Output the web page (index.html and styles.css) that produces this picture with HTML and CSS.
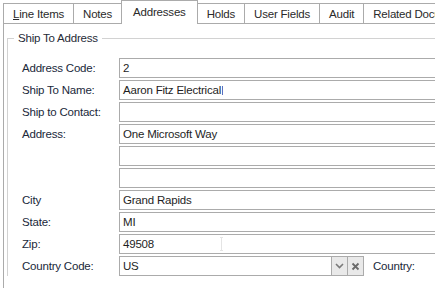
FILE: index.html
```html
<html>
    <head>
        <title>Addresses</title>
        <link rel="stylesheet" href="styles.css">
    </head>
    <body>
        <div class="tabs">
            <div class="tab"><u>L</u>ine Items</div>
            <div class="tab">Notes</div>
            <div class="tab active">Addresses</div>
            <div class="tab">Holds</div>
            <div class="tab">User Fields</div>
            <div class="tab">Audit</div>
            <div class="tab">Related Documents</div>
        </div>
        <div class="panel">
            <fieldset class="group">
                <legend>Ship To Address</legend>
                <div class="form">
                    <label>Address Code:</label>
                    <div class="field">2</div>
                    <label>Ship To Name:</label>
                    <div class="field">Aaron Fitz Electrical<span class="caret"></span></div>
                    <label>Ship to Contact:</label>
                    <div class="field"></div>
                    <label>Address:</label>
                    <div class="field">One Microsoft Way</div>
                    <label></label>
                    <div class="field"></div>
                    <label></label>
                    <div class="field"></div>
                    <label>City</label>
                    <div class="field">Grand Rapids</div>
                    <label>State:</label>
                    <div class="field">MI</div>
                    <label>Zip:</label>
                    <div class="field">49508<span class="ibeam"></span></div>
                    <label>Country Code:</label>
                    <div class="combo-row">
                        <div class="combo">
                            <div class="combo-text">US</div>
                            <div class="combo-btn">
                                <svg width="9" height="6" viewBox="0 0 9 6"><path d="M1 1 L4.5 4.5 L8 1" fill="none" stroke="#7a7a7a" stroke-width="1.6"/></svg>
                            </div>
                            <div class="combo-btn">
                                <svg width="9" height="9" viewBox="0 0 9 9"><path d="M1.5 1.5 L7.5 7.5 M7.5 1.5 L1.5 7.5" fill="none" stroke="#6a6a6a" stroke-width="1.8"/></svg>
                            </div>
                        </div>
                        <span class="side-label">Country:</span>
                    </div>
                </div>
            </fieldset>
        </div>
    </body>
</html>
```

FILE: styles.css
```css
body {
    margin: 0;
    background-color: #ffffff;
    font-family: "Liberation Sans", Arial, sans-serif;
    font-size: 11.5px;
    letter-spacing: -0.2px;
    color: #20283a;
    overflow: hidden;
    width: 435px;
    height: 288px;
}
.tabs {
    display: flex;
    align-items: flex-end;
    height: 23px;
    padding-left: 3px;
    white-space: nowrap;
}
.tab {
    height: 19px;
    line-height: 20px;
    padding: 0 9px;
    border: 1px solid #ababab;
    border-bottom: none;
    margin-left: -1px;
    background-color: #ffffff;
    color: #2a2a2a;
}
.tab:first-child {
    margin-left: 0;
}
.tab u {
    text-decoration: underline;
    text-underline-offset: 1px;
}
.tab.active {
    position: relative;
    z-index: 1;
    height: 23px;
    line-height: 22px;
    margin-bottom: -1px;
    padding: 0 11px;
}
.panel {
    border-top: 1px solid #ababab;
    border-left: 1px solid #ababab;
    margin-left: 3px;
    height: 264px;
}
.group {
    margin: 7px 0 0 3px;
    padding: 13px 0 0 14px;
    border: 1px solid #d2d2d2;
    border-right: none;
    border-bottom: none;
    min-width: 0;
}
.group legend {
    margin-left: -8px;
    padding: 0 4px;
    line-height: 14px;
    color: #262a36;
}
.form {
    display: grid;
    grid-template-columns: 97px 340px;
    grid-auto-rows: 20px;
    row-gap: 2px;
    align-items: center;
}
.form label {
    line-height: 20px;
}
.field {
    height: 20px;
    box-sizing: border-box;
    border: 1px solid #ababab;
    padding: 0 3px;
    line-height: 18px;
    color: #1e1e1e;
    white-space: nowrap;
    position: relative;
}
.caret {
    display: inline-block;
    width: 1px;
    height: 9px;
    margin-left: 1px;
    vertical-align: -1px;
    background-color: #5a6fc0;
}
.ibeam {
    position: absolute;
    left: 100px;
    top: 2px;
    width: 3px;
    height: 14px;
    border-top: 1px solid #e4e4e4;
    border-bottom: 1px solid #e4e4e4;
    box-sizing: border-box;
}
.ibeam::after {
    content: "";
    display: block;
    width: 1px;
    height: 12px;
    margin-left: 1px;
    background-color: #e4e4e4;
}
.combo-row {
    display: flex;
    align-items: center;
    height: 20px;
}
.combo {
    display: flex;
    width: 245px;
    height: 20px;
    box-sizing: border-box;
    border: 1px solid #ababab;
}
.combo-text {
    flex: 1;
    padding: 0 3px;
    line-height: 18px;
    color: #1e1e1e;
}
.combo-btn {
    width: 15px;
    border-left: 1px solid #ababab;
    background-color: #e9e9e9;
    display: flex;
    align-items: center;
    justify-content: center;
}
.side-label {
    margin-left: 9px;
}
```
